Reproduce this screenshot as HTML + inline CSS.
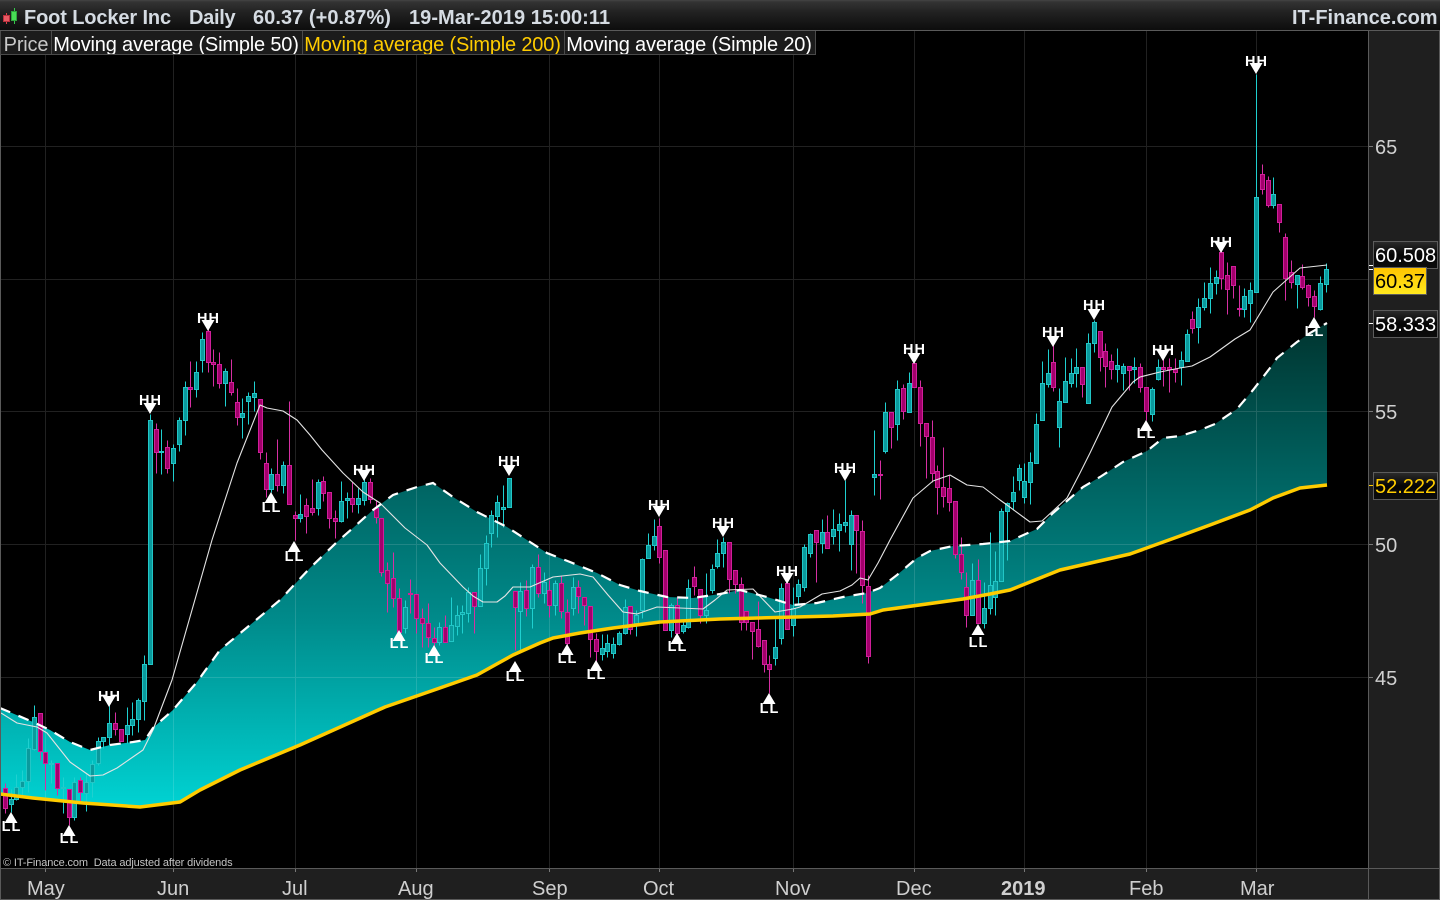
<!DOCTYPE html>
<html><head><meta charset="utf-8"><title>Foot Locker Inc</title>
<style>
html,body{margin:0;padding:0;background:#000;width:1440px;height:900px;overflow:hidden}
body{font-family:"Liberation Sans",sans-serif;position:relative}
.a{position:absolute;white-space:pre}
#top{left:0;top:0;width:1440px;height:30px;background:linear-gradient(#444 0,#333 2px,#222 12px,#0e0e0e 29px);border-bottom:1px solid #5a5a5a}
.t{top:5px;font-size:20px;line-height:26px;font-weight:bold;color:#d5dbe2}
.leg{top:31px;height:23px;line-height:28px;font-size:20px;background:#1b1b1b;border:1px solid #4a4a4a;border-top:none;box-sizing:content-box;color:#fff;text-align:center;letter-spacing:-.18px;overflow:hidden}
.ax{font-size:20px;line-height:24px;color:#d0d0d0}
.mo{top:877px;font-size:20px;line-height:24px;color:#cfcfcf}
.box{left:1373px;height:26px;line-height:29px;font-size:20px;box-sizing:content-box;border:1px solid #5c5c5c;background:linear-gradient(#2a2a2a,#050505 50%,#0c0c0c);color:#fff;padding-left:1px;overflow:hidden}
svg text{font-family:"Liberation Sans",sans-serif;font-weight:bold;font-size:14.5px;letter-spacing:1px;fill:#fff;text-anchor:middle}
</style></head><body>
<div class="a" style="left:1369px;top:31px;width:71px;height:869px;background:#1f1f1f"></div>
<div class="a" style="left:0;top:869px;width:1440px;height:31px;background:#1f1f1f"></div>
<svg class="a" style="left:0;top:0" width="1440" height="900" viewBox="0 0 1440 900">
<defs>
<linearGradient id="g" gradientUnits="userSpaceOnUse" x1="0" y1="335" x2="0" y2="805"><stop offset="0" stop-color="#003833"/><stop offset=".3" stop-color="#006260"/><stop offset=".6" stop-color="#008a8a"/><stop offset="1" stop-color="#00d2d2"/></linearGradient>
<clipPath id="c"><rect x="1" y="31" width="1367" height="837"/></clipPath>
</defs>
<g clip-path="url(#c)">
<path fill="url(#g)" d="M0 708L33 722 50 730 70 742 90 750 110 745 133 742 145 740 153 728 173 710 197 682 220 650 280 600 310 568 337 542 353 528 373 510 393 495 417 487 433 483 453 497 477 512 507 527 530 542 547 553 570 562 597 573 620 585 640 591 667 597 693 598 720 594 740 590 767 597 793 605 817 603 843 597 867 593 880 588 897 575 917 558 930 551 953 546 983 544 1010 541 1037 529 1053 513 1083 487 1100 477 1123 462 1147 451 1163 438 1180 436 1200 430 1215 424 1237 409 1253 390 1270 368 1277 358 1297 342 1310 333 1327 323V485L1300 488 1273 498 1250 510 1210 525 1180 536 1130 554 1060 570 1010 590 990 594 963 599 883 610 870 614 833 616 750 617 720 619 660 622 613 628 580 633 553 638 540 643 513 655 477 675 437 689 385 707 300 745 240 770 200 790 180 802 140 807 83 803 33 798 0 794Z"/>
<path fill="none" stroke="#fff" stroke-opacity=".13" d="M45.500 31V872M173.500 31V872M295.500 31V872M416.500 31V872M549.500 31V872M659.500 31V872M793.500 31V872M914.500 31V872M1024.500 31V872M1146.500 31V872M1256.500 31V872M1 146.500H1368M1 279.500H1368M1 411.500H1368M1 544.500H1368M1 677.500H1368"/>
<g transform="translate(.5 .5)" fill="none" stroke-width="1">
<path stroke="#1fd0d0" d="M11 789V812M16 774V800M22 770V795M28 738V792M34 705V750M51 760V783M63 777V813M74 777V820M86 773V811M92 760V797M98 737V765M103 737V748M109 700V745M127 707V743M132 702V735M138 698V732M144 655V720M150 414V664M161 429V474M173 444V481M179 417V451M185 381V435M196 361V397M202 332V372M225 368V406M242 398V438M248 392V424M254 381V411M271 468V492M283 461V493M300 494V522M318 479V515M341 481V522M347 492V518M358 488V513M364 479V505M405 600V633M439 622V645M451 597V641M457 605V635M462 605V633M468 587V622M480 554V606M486 535V585M491 510V547M497 495V537M503 485V527M509 478V507M520 582V650M532 564V628M544 572V603M555 580V615M573 577V615M602 634V660M607 634V657M613 637V658M619 631V645M625 599V634M636 610V636M642 558V618M648 533V558M654 519V550M671 603V637M683 622V633M688 579V628M706 573V623M712 564V593M717 539V568M723 537V567M775 619V665M781 583V644M793 587V636M798 579V603M804 544V591M810 533V557M822 519V553M833 509V544M839 513V551M845 480V532M851 510V570M874 430V495M885 402V453M897 380V440M909 372V412M972 563V615M984 582V628M990 532V614M995 551V615M1001 508V581M1007 502V560M1013 476V510M1019 464V490M1024 463V503M1030 452V504M1036 413V463M1042 361V420M1048 349V387M1059 388V447M1065 357V402M1071 358V387M1076 348V387M1088 333V403M1094 320V352M1117 348V382M1123 363V390M1134 357V383M1152 387V421M1158 359V380M1181 351V385M1187 329V361M1198 298V343M1204 282V310M1210 267V313M1216 270V294M1244 288V317M1250 282V322M1256 74V292M1273 177V208M1297 275V308M1320 276V310M1326 263V292"/>
<path stroke="#d62fa3" d="M5 783V813M40 713V760M45 752V790M57 763V795M69 790V825M80 777V802M115 712V735M121 729V741M156 423V473M167 440V473M190 361V407M208 328V372M213 349V386M219 352V388M231 359V395M237 388V425M260 399V459M266 452V497M277 439V491M289 401V504M295 511V540M306 498V533M312 479V515M323 476V501M329 492V528M335 510V538M352 482V512M370 478V503M376 500V523M381 518V576M387 562V612M393 552V607M399 588V633M410 579V613M416 594V633M422 608V647M428 603V647M434 627V652M445 615V642M474 592V633M515 591V650M526 580V616M538 554V597M549 580V617M561 575V618M567 599V647M578 580V613M584 597V625M590 606V657M596 633V662M630 606V634M659 518V563M665 550V630M677 597V637M694 566V595M700 589V623M729 542V593M735 570V593M741 577V630M746 611V630M752 622V659M758 601V647M764 640V672M769 655V693M787 580V629M816 530V582M827 515V548M856 515V573M862 520V603M868 575V663M880 460V499M891 412V448M903 384V419M914 363V387M920 380V446M926 423V478M932 420V482M937 465V514M943 447V507M949 475V511M955 501V558M961 537V579M966 572V627M978 559V623M1053 345V391M1082 367V397M1100 331V371M1105 343V387M1111 354V379M1129 366V390M1140 363V392M1146 387V420M1163 353V386M1169 358V392M1175 358V382M1192 311V333M1221 243V289M1227 262V314M1233 266V298M1239 285V316M1262 164V194M1268 176V207M1279 204V232M1285 233V300M1291 260V288M1302 264V289M1308 284V306M1314 290V317"/>
<path stroke="#22c6c6" fill="#0a9a9d" d="M9 799h4v5h-4zM14 787h4v12h-4zM20 781h4v6h-4zM26 748h4v33h-4zM32 717h4v32h-4zM49 763h4v1h-4zM61 787h4v1h-4zM72 782h4v35h-4zM84 782h4v11h-4zM90 764h4v18h-4zM96 741h4v22h-4zM101 737h4v4h-4zM107 723h4v14h-4zM125 725h4v9h-4zM130 719h4v6h-4zM136 700h4v19h-4zM142 664h4v37h-4zM148 420h4v244h-4zM159 451h4v1h-4zM171 448h4v15h-4zM177 420h4v24h-4zM183 387h4v33h-4zM194 372h4v17h-4zM200 339h4v21h-4zM223 371h4v12h-4zM240 413h4v4h-4zM246 396h4v5h-4zM252 393h4v4h-4zM269 474h4v15h-4zM281 465h4v20h-4zM298 514h4v4h-4zM316 482h4v26h-4zM339 501h4v20h-4zM345 498h4v2h-4zM356 498h4v6h-4zM362 482h4v18h-4zM403 607h4v21h-4zM437 627h4v15h-4zM449 625h4v16h-4zM455 615h4v11h-4zM460 612h4v2h-4zM466 592h4v21h-4zM478 568h4v38h-4zM484 543h4v25h-4zM489 515h4v18h-4zM495 502h4v14h-4zM501 507h4v2h-4zM507 478h4v29h-4zM518 591h4v20h-4zM530 567h4v41h-4zM542 582h4v11h-4zM553 583h4v22h-4zM571 587h4v21h-4zM600 648h4v6h-4zM605 643h4v8h-4zM611 644h4v9h-4zM617 633h4v11h-4zM623 607h4v26h-4zM634 615h4v8h-4zM640 559h4v51h-4zM646 545h4v13h-4zM652 536h4v9h-4zM669 605h4v25h-4zM681 625h4v6h-4zM686 588h4v39h-4zM704 610h4v5h-4zM710 569h4v21h-4zM715 553h4v13h-4zM721 542h4v11h-4zM773 647h4v11h-4zM779 588h4v50h-4zM791 608h4v17h-4zM796 584h4v12h-4zM802 547h4v40h-4zM808 534h4v19h-4zM820 532h4v11h-4zM831 529h4v7h-4zM837 524h4v6h-4zM843 522h4v3h-4zM849 515h4v29h-4zM872 474h4v3h-4zM883 412h4v39h-4zM895 389h4v35h-4zM907 383h4v29h-4zM970 580h4v35h-4zM982 608h4v15h-4zM988 585h4v23h-4zM993 581h4v16h-4zM999 511h4v70h-4zM1005 503h4v8h-4zM1011 492h4v9h-4zM1017 468h4v12h-4zM1022 481h4v16h-4zM1028 462h4v20h-4zM1034 424h4v39h-4zM1040 383h4v37h-4zM1046 373h4v11h-4zM1057 401h4v26h-4zM1063 381h4v21h-4zM1069 373h4v10h-4zM1074 367h4v6h-4zM1086 343h4v60h-4zM1092 322h4v21h-4zM1115 365h4v4h-4zM1121 366h4v7h-4zM1132 367h4v2h-4zM1150 389h4v25h-4zM1156 367h4v12h-4zM1179 360h4v7h-4zM1185 334h4v27h-4zM1196 307h4v20h-4zM1202 298h4v9h-4zM1208 283h4v15h-4zM1214 277h4v6h-4zM1242 296h4v13h-4zM1248 290h4v13h-4zM1254 197h4v95h-4zM1271 194h4v11h-4zM1295 275h4v9h-4zM1318 283h4v26h-4zM1324 269h4v15h-4z"/>
<path stroke="#cf1f9a" fill="#a3006c" d="M3 788h4v20h-4zM38 713h4v38h-4zM43 752h4v11h-4zM55 763h4v25h-4zM67 789h4v28h-4zM78 780h4v12h-4zM113 723h4v6h-4zM119 729h4v12h-4zM154 429h4v23h-4zM165 447h4v21h-4zM188 387h4v2h-4zM206 331h4v31h-4zM211 362h4v2h-4zM217 364h4v19h-4zM229 382h4v10h-4zM235 402h4v15h-4zM258 399h4v53h-4zM264 463h4v26h-4zM275 474h4v11h-4zM287 465h4v39h-4zM293 515h4v3h-4zM304 505h4v11h-4zM310 508h4v4h-4zM321 481h4v12h-4zM327 492h4v26h-4zM333 518h4v3h-4zM350 498h4v6h-4zM368 482h4v17h-4zM374 508h4v9h-4zM379 518h4v54h-4zM385 570h4v13h-4zM391 578h4v20h-4zM397 598h4v34h-4zM408 593h4v1h-4zM414 594h4v24h-4zM420 618h4v5h-4zM426 623h4v14h-4zM432 638h4v4h-4zM443 627h4v15h-4zM472 592h4v14h-4zM513 591h4v16h-4zM524 590h4v18h-4zM536 567h4v26h-4zM547 590h4v15h-4zM559 583h4v28h-4zM565 612h4v31h-4zM576 587h4v9h-4zM582 597h4v8h-4zM588 606h4v33h-4zM594 639h4v12h-4zM628 606h4v23h-4zM657 526h4v31h-4zM663 550h4v80h-4zM675 605h4v28h-4zM692 577h4v9h-4zM698 589h4v26h-4zM727 542h4v37h-4zM733 570h4v14h-4zM739 584h4v38h-4zM744 611h4v11h-4zM750 622h4v9h-4zM756 629h4v17h-4zM762 640h4v24h-4zM767 664h4v5h-4zM785 583h4v46h-4zM814 530h4v12h-4zM825 532h4v16h-4zM854 515h4v15h-4zM860 531h4v54h-4zM866 586h4v70h-4zM878 474h4v1h-4zM889 412h4v15h-4zM901 388h4v23h-4zM912 363h4v24h-4zM918 387h4v36h-4zM924 423h4v13h-4zM930 437h4v36h-4zM935 471h4v16h-4zM941 487h4v9h-4zM947 488h4v14h-4zM953 501h4v53h-4zM959 554h4v18h-4zM964 587h4v28h-4zM976 580h4v43h-4zM1051 362h4v25h-4zM1080 367h4v17h-4zM1098 331h4v26h-4zM1103 351h4v15h-4zM1109 361h4v8h-4zM1127 366h4v4h-4zM1138 367h4v20h-4zM1144 387h4v24h-4zM1161 367h4v2h-4zM1167 367h4v2h-4zM1173 369h4v3h-4zM1190 319h4v9h-4zM1219 252h4v26h-4zM1225 275h4v14h-4zM1231 266h4v19h-4zM1237 308h4v1h-4zM1260 174h4v15h-4zM1266 180h4v25h-4zM1277 204h4v18h-4zM1283 237h4v41h-4zM1289 272h4v10h-4zM1300 276h4v11h-4zM1306 285h4v12h-4zM1312 296h4v10h-4z"/>
</g>
<path fill="none" stroke="#e4e4e4" stroke-width="1.100" stroke-linejoin="round" d="M1 713L17 723 37 727 47 733 70 762 90 776 103 775 117 768 143 750 153 730 172 680 212 540 237 463 260 405 267 408 283 411 297 420 310 435 322 450 343 473 363 492 380 503 405 528 427 545 440 563 463 587 473 596 483 602 497 602 505 596 513 587 530 587 553 577 580 574 593 577 608 595 623 612 637 614 657 607 703 609 715 600 727 590 753 589 775 612 793 609 800 607 822 594 840 591 852 585 860 578 868 580 878 563 890 540 913 498 933 481 950 475 967 485 983 487 1000 500 1007 505 1030 522 1042 521 1067 498 1080 473 1090 453 1112 407 1133 382 1140 377 1160 372 1180 368 1192 366 1210 357 1235 339 1250 330 1273 292 1300 268 1327 265"/>
<path fill="none" stroke="#fff" stroke-width="2.200" stroke-dasharray="11 9" d="M0 708L33 722 50 730 70 742 90 750 110 745 133 742 145 740 153 728 173 710 197 682 220 650 280 600 310 568 337 542 353 528 373 510 393 495 417 487 433 483 453 497 477 512 507 527 530 542 547 553 570 562 597 573 620 585 640 591 667 597 693 598 720 594 740 590 767 597 793 605 817 603 843 597 867 593 880 588 897 575 917 558 930 551 953 546 983 544 1010 541 1037 529 1053 513 1083 487 1100 477 1123 462 1147 451 1163 438 1180 436 1200 430 1215 424 1237 409 1253 390 1270 368 1277 358 1297 342 1310 333 1327 323"/>
<path fill="none" stroke="#ffcc00" stroke-width="3.500" stroke-linejoin="round" d="M0 794L33 798 83 803 140 807 180 802 200 790 240 770 300 745 385 707 437 689 477 675 495 665 513 655 540 643 553 638 580 633 613 628 660 622 720 619 833 616 870 614 883 610 963 599 990 594 1010 590 1035 580 1060 570 1130 554 1180 536 1210 525 1250 510 1273 498 1300 488 1327 485"/>
<g fill="#fff">
<path d="M1256 74l-6.500-11h13zM109 707l-6.500-11h13zM150 414l-6.500-11h13zM208 331l-6.500-11h13zM364 481l-6.500-11h13zM509 476l-6.500-11h13zM659 517l-6.500-11h13zM723 537l-6.500-11h13zM787 584l-6.500-11h13zM845 481l-6.500-11h13zM914 364l-6.500-11h13zM1053 347l-6.500-11h13zM1094 320l-6.500-11h13zM1163 361l-6.500-11h13zM1221 253l-6.500-11h13z"/>
<path d="M11 812l-6.500 11h13zM69 825l-6.500 11h13zM271 492l-6.500 11h13zM294 541l-6.500 11h13zM399 630l-6.500 11h13zM434 645l-6.500 11h13zM515 661l-6.500 11h13zM567 644l-6.500 11h13zM596 660l-6.500 11h13zM677 633l-6.500 11h13zM769 693l-6.500 11h13zM978 624l-6.500 11h13zM1146 420l-6.500 11h13zM1314 317l-6.500 11h13z"/>
</g>
<text x="1256.500" y="66">HH</text><text x="109.500" y="701">HH</text><text x="150.500" y="405">HH</text><text x="208.500" y="323">HH</text><text x="364.500" y="475">HH</text><text x="509.500" y="466">HH</text><text x="659.500" y="510">HH</text><text x="723.500" y="528">HH</text><text x="787.500" y="576">HH</text><text x="845.500" y="473">HH</text><text x="914.500" y="354">HH</text><text x="1053.500" y="337">HH</text><text x="1094.500" y="310">HH</text><text x="1163.500" y="355">HH</text><text x="1221.500" y="247">HH</text>
<text x="11.500" y="831">LL</text><text x="69.500" y="843">LL</text><text x="271.500" y="512">LL</text><text x="294.500" y="561">LL</text><text x="399.500" y="648">LL</text><text x="434.500" y="663">LL</text><text x="515.500" y="681">LL</text><text x="567.500" y="663">LL</text><text x="596.500" y="679">LL</text><text x="677.500" y="651">LL</text><text x="769.500" y="713">LL</text><text x="978.500" y="647">LL</text><text x="1146.500" y="438">LL</text><text x="1314.500" y="336">LL</text>
</g>
<path fill="none" stroke="#5a5a5a" d="M.500 30V899.500H1439.500V30M1368.500 30V899M0 868.500H1440"/>
<path fill="none" stroke="#777" d="M45.500 869V872M173.500 869V872M295.500 869V872M416.500 869V872M549.500 869V872M659.500 869V872M793.500 869V872M914.500 869V872M1024.500 869V872M1146.500 869V872M1256.500 869V872M1369 146.500H1373M1369 411.500H1373M1369 544.500H1373M1369 677.500H1373"/>
<path fill="none" stroke="#fff" d="M1369 265.500H1373M1369 269.500H1373M1369 323.500H1373"/>
<path fill="none" stroke="#ffcc00" d="M1369 485.500H1373"/>
</svg>
<div class="a" id="top"></div>
<svg class="a" style="left:0;top:0" width="20" height="28" viewBox="0 0 20 28">
<path stroke="#35c94a" d="M14.500 8V24"/><path fill="#48dc55" stroke="#2ea53c" d="M11.500 11.500h5v9h-5z"/>
<path stroke="#e0404d" d="M6.500 13V24"/><path fill="#e85a64" stroke="#b8303c" d="M3.500 15.500h6v6h-6z"/>
</svg>
<div class="a t" style="left:24px;letter-spacing:-.13px">Foot Locker Inc</div>
<div class="a t" style="left:189px;letter-spacing:-.3px">Daily</div>
<div class="a t" style="left:253px;letter-spacing:.05px">60.37 (+0.87%)</div>
<div class="a t" style="left:409px;letter-spacing:.05px">19-Mar-2019 15:00:11</div>
<div class="a t" style="left:1292px">IT-Finance.com</div>
<div class="a leg" style="left:0;width:50px;color:#c8c8c8">Price</div>
<div class="a leg" style="left:51px;width:250px;text-indent:-2px">Moving average (Simple 50)</div>
<div class="a leg" style="left:302px;width:261px;color:#ffcc00;text-indent:-2px">Moving average (Simple 200)</div>
<div class="a leg" style="left:564px;width:250px;text-indent:-2px">Moving average (Simple 20)</div>
<div class="a ax" style="left:1375px;top:136px">65</div>
<div class="a ax" style="left:1375px;top:401px">55</div>
<div class="a ax" style="left:1375px;top:534px">50</div>
<div class="a ax" style="left:1375px;top:667px">45</div>
<div class="a box" style="top:241px;width:62px">60.508</div>
<div class="a box" style="top:310px;width:62px">58.333</div>
<div class="a box" style="top:472px;width:62px;color:#ffcc00">52.222</div>
<div class="a box" style="top:267px;width:51px;color:#000;background:linear-gradient(#ffc400,#ffe81e)">60.37</div>
<div class="a" style="left:3px;top:856px;font-size:11px;line-height:14px;color:#c4c4c4;letter-spacing:-.13px">© IT-Finance.com  Data adjusted after dividends</div>
<div class="a mo" style="left:27px">May</div>
<div class="a mo" style="left:157px">Jun</div>
<div class="a mo" style="left:282px">Jul</div>
<div class="a mo" style="left:398px">Aug</div>
<div class="a mo" style="left:532px">Sep</div>
<div class="a mo" style="left:643px">Oct</div>
<div class="a mo" style="left:775px">Nov</div>
<div class="a mo" style="left:896px">Dec</div>
<div class="a mo" style="left:1001px;font-weight:bold">2019</div>
<div class="a mo" style="left:1129px">Feb</div>
<div class="a mo" style="left:1240px">Mar</div>
</body></html>
